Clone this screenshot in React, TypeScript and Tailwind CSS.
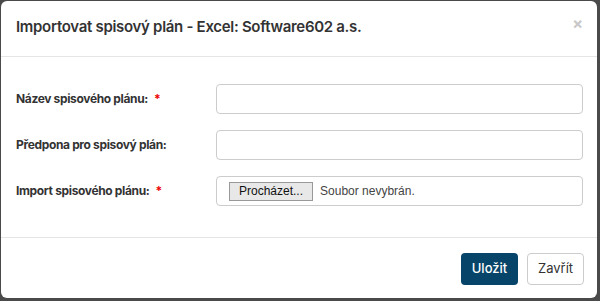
import React from "react";

const Field = ({ label, required, children }: { label: string; required?: boolean; children: React.ReactNode }) => (
  <div className="flex items-center">
    <label className="w-[200px] shrink-0 text-[12px] font-bold tracking-[-0.35px] text-[#333]">
      {label}
      {required && <span className="ml-[6px] text-[#e00]">*</span>}
    </label>
    <div className="flex-1">{children}</div>
  </div>
);

const App = () => {
  return (
    <div className="h-[301px] w-[600px] bg-[#4a4a4a] pl-px pt-px font-['Inter',sans-serif]">
      <div className="flex h-[297px] w-[596px] flex-col rounded-[6px] bg-white">
        <div className="flex h-[56px] shrink-0 items-center justify-between border-b border-[#e5e5e5] pb-[2px] pl-[15px] pr-[14px]">
          <h1 className="text-[15px] font-semibold tracking-[-0.3px] text-[#333]">
            Importovat spisový plán - Excel: Software602 a.s.
          </h1>
          <span className="mb-[10px] text-[16px] font-bold leading-none text-[#c8c8c8]">×</span>
        </div>

        <div className="flex flex-col gap-4 border-b border-[#e5e5e5] px-[15px] pb-[31px] pt-[27px]">
          <Field label="Název spisového plánu:" required>
            <div className="h-[30px] w-[367px] rounded-[4px] border border-[#ccc]" />
          </Field>
          <Field label="Předpona pro spisový plán:">
            <div className="h-[30px] w-[367px] rounded-[4px] border border-[#ccc]" />
          </Field>
          <Field label="Import spisového plánu:" required>
            <div className="flex h-[30px] w-[367px] items-center rounded-[4px] border border-[#ccc] pl-[12px]">
              <span className="flex h-[19px] items-center border border-[#999] bg-[#e8e8e8] px-[9px] font-['Liberation_Sans',sans-serif] text-[12px] text-[#111]">
                Procházet...
              </span>
              <span className="ml-[7px] font-['Liberation_Sans',sans-serif] text-[12px] text-[#444]">Soubor nevybrán.</span>
            </div>
          </Field>
        </div>

        <div className="flex flex-1 items-start justify-end gap-[9px] pr-[13px] pt-[15px]">
          <button className="h-[32px] w-[57px] rounded-[4px] bg-[#064469] text-[13px] font-medium text-white">
            Uložit
          </button>
          <button className="h-[32px] w-[57px] rounded-[4px] border border-[#ccc] bg-white text-[13px] text-[#333]">
            Zavřít
          </button>
        </div>
      </div>
    </div>
  );
};

export default App;
